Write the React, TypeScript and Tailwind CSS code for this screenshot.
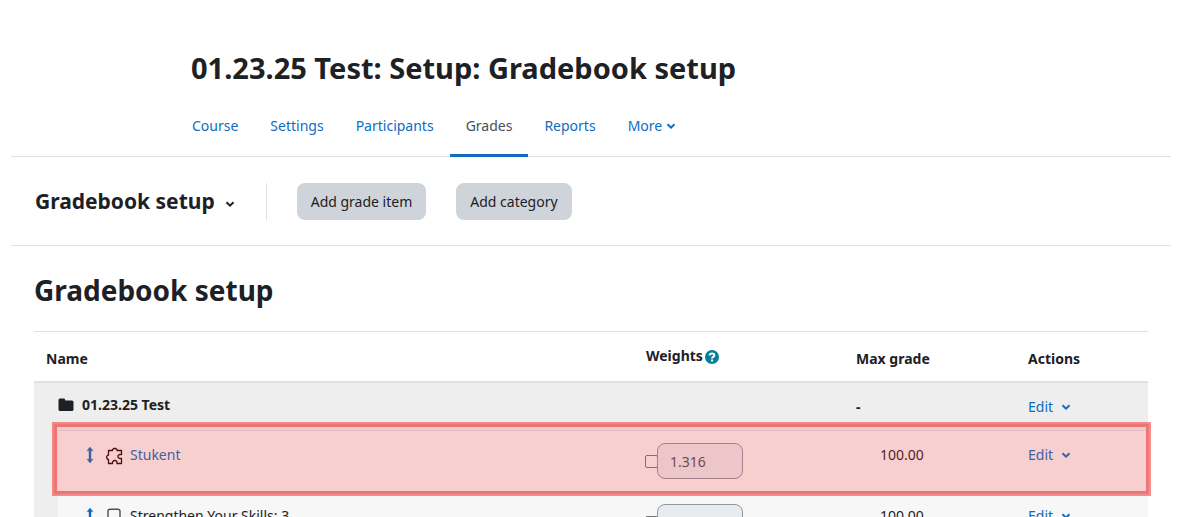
import clsx from 'clsx';

interface GradeItem {
  id: string;
  name: string;
  kind: 'tool' | 'quiz';
  weight: string;
  maxGrade: string;
}

const tabs = ['Course', 'Settings', 'Participants', 'Grades', 'Reports'];

const items: GradeItem[] = [
  { id: 'stukent', name: 'Stukent', kind: 'tool', weight: '1.316', maxGrade: '100.00' },
  { id: 'skills3', name: 'Strengthen Your Skills: 3', kind: 'quiz', weight: '1.316', maxGrade: '100.00' },
];

function Chevron({ className }: { className?: string }) {
  return (
    <svg viewBox="0 0 10 8" className={clsx('inline-block h-2 w-[10px]', className)} aria-hidden="true">
      <path d="M1.5 2.2 L5 5.6 L8.5 2.2" fill="none" stroke="currentColor" strokeWidth="2" />
    </svg>
  );
}

function MoveIcon() {
  return (
    <svg viewBox="0 0 8 16" className="h-4 w-2" aria-hidden="true">
      <path d="M4 0 L7 3.8 H5 V12.2 H7 L4 16 L1 12.2 H3 V3.8 H1 Z" fill="currentColor" stroke="currentColor" strokeWidth="0.4" />
    </svg>
  );
}

function FolderIcon() {
  return (
    <svg viewBox="0 0 16 14" className="h-[14px] w-4" aria-hidden="true">
      <path d="M2 0.5 H6 Q7 0.5 7 1.5 L7.4 2.5 H14 Q15.5 2.5 15.5 4 V11.5 Q15.5 13 14 13 H2 Q0.5 13 0.5 11.5 V2 Q0.5 0.5 2 0.5 Z" fill="currentColor" />
    </svg>
  );
}

function PuzzleIcon() {
  return (
    <svg viewBox="0 0 18 18" className="mt-0.5 h-[18px] w-[18px]" aria-hidden="true">
      <path
        d="M2.5 3.5 H6.5 V2.8 L7.8 1.5 H9.8 L11 2.8 V3.5 H15.5 V7.5 H13.5 L12 8.8 V10.2 L13.5 11.5 H15.5 V16.5 H11 V15 L9.8 13.5 H8 L6.5 15 V16.5 H2.5 V12.5 H1.8 L0.7 11.2 V9.4 L1.8 8.2 H2.5 Z"
        fill="none"
        stroke="#1d0508"
        strokeWidth="1.3"
        strokeLinejoin="round"
      />
    </svg>
  );
}

function QuizIcon() {
  return (
    <svg viewBox="0 0 18 18" className="h-[18px] w-[18px]" aria-hidden="true">
      <rect x="2" y="2.2" width="12" height="14" rx="2" fill="none" stroke="#495057" strokeWidth="1.4" />
    </svg>
  );
}

function HelpIcon() {
  return (
    <svg viewBox="0 0 14 14" className="mt-0.5 h-[14px] w-[14px]" aria-hidden="true">
      <circle cx="7" cy="7" r="7" fill="#008196" />
      <path d="M4.6 5.4 Q4.9 3.6 7 3.6 Q9.3 3.6 9.3 5.4 Q9.3 6.4 8 7 Q7.1 7.4 7.1 8.5" fill="none" stroke="#fff" strokeWidth="2" />
      <rect x="6" y="9.5" width="2.2" height="2" fill="#fff" />
    </svg>
  );
}

function EditButton() {
  return (
    <button type="button" className="flex items-center gap-2 text-[#0f6cbf]">
      Edit
      <Chevron />
    </button>
  );
}

function ItemRow({ item }: { item: GradeItem }) {
  return (
    <tr className="h-[61px] border-t border-[#dee2e6] bg-[#f7f7f7] align-top">
      <td className="pt-3 pl-7">
        <div className="flex h-6 items-center text-[#0f6cbf]">
          <button type="button" title="Move" className="mr-3">
            <MoveIcon />
          </button>
          {item.kind === 'tool' ? <PuzzleIcon /> : <QuizIcon />}
          {item.kind === 'tool' ? (
            <a href="#stukent" className="ml-1.5">{item.name}</a>
          ) : (
            <span className="ml-1.5 text-[#1d2125]">{item.name}</span>
          )}
        </div>
      </td>
      <td className="pt-3 pl-[11px]">
        <div className="flex items-center">
          <input
            type="checkbox"
            aria-label={`Override weight of ${item.name}`}
            className="-mr-px h-[13px] w-[13px] appearance-none rounded-[2px] border border-[#767676]"
          />
          <input
            type="text"
            disabled
            defaultValue={item.weight}
            aria-label={`Weight of ${item.name}`}
            className="h-9 w-[86px] rounded-lg border border-[#8f959e] bg-[#e9ecef] px-3 text-[#495057]"
          />
        </div>
      </td>
      <td className="pt-3 pl-9">{item.maxGrade}</td>
      <td className="pt-3 pl-3">
        <EditButton />
      </td>
    </tr>
  );
}

export default function App() {
  return (
    <div className="h-screen overflow-hidden bg-white pr-[23px] pl-[11px] font-['Noto_Sans','Segoe_UI',sans-serif] text-sm leading-6 text-[#1d2125]">
      <header className="border-b border-[#dee2e6] pt-12">
        <div className="mx-auto max-w-[830px]">
          <h1 className="px-[15px] text-[29px] leading-10 font-bold">01.23.25 Test: Setup: Gradebook setup</h1>
          <nav className="-mb-px flex pt-2">
            {tabs.map((tab) => (
              <a
                key={tab}
                href={`#${tab.toLowerCase()}`}
                className={clsx(
                  'flex h-[61px] items-center border-b-[3px] px-4 pt-0.5',
                  tab === 'Grades' ? 'border-[#0f6cbf] text-[#495057]' : 'border-transparent text-[#0f6cbf]'
                )}
              >
                {tab}
              </a>
            ))}
            <button type="button" className="flex h-[61px] items-center gap-1 border-b-[3px] border-transparent px-4 pt-0.5 text-[#0f6cbf]">
              More
              <Chevron />
            </button>
          </nav>
        </div>
      </header>

      <div className="flex h-[89px] items-center border-b border-[#dee2e6] pl-6">
        <button type="button" className="flex items-center gap-2.5 text-[21px] font-bold">
          Gradebook setup
          <Chevron className="mt-1.5" />
        </button>
        <div className="ml-[31px] flex h-[37px] gap-[30px] border-l border-[#dee2e6] pl-[30px]">
          <button type="button" className="rounded-lg bg-[#ced4da] px-3.5 pt-0.5">Add grade item</button>
          <button type="button" className="rounded-lg bg-[#ced4da] px-3.5 pt-0.5">Add category</button>
        </div>
      </div>

      <main className="px-[23px]">
        <h2 className="pt-6 pb-[21px] text-[28px] leading-10 font-bold">Gradebook setup</h2>
        <div className="relative">
          <table className="w-full table-fixed border-collapse text-left">
            <colgroup>
              <col className="w-6" />
              <col />
              <col className="w-[210px]" />
              <col className="w-[172px]" />
              <col className="w-[132px]" />
            </colgroup>
            <thead>
              <tr className="h-[50px] border-t border-b-2 border-[#dee2e6]">
                <th colSpan={2} className="pt-1.5 pl-3">Name</th>
                <th className="pt-1 pl-3">
                  <span className="flex items-center gap-0.5 pb-1">
                    Weights
                    <HelpIcon />
                  </span>
                </th>
                <th className="pt-1.5 pl-3">Max grade</th>
                <th className="pt-1.5 pl-3">Actions</th>
              </tr>
            </thead>
            <tbody>
              <tr className="h-[49px] bg-[#eee]">
                <th colSpan={2} className="pb-1 pl-6">
                  <span className="flex items-center gap-2">
                    <FolderIcon />
                    01.23.25 Test
                  </span>
                </th>
                <td />
                <td className="pt-px pl-3 font-bold">-</td>
                <td className="pt-px pl-3">
                  <EditButton />
                </td>
              </tr>
              <tr className="bg-[#eee]">
                <td rowSpan={items.length + 1} />
              </tr>
              {items.map((item) => (
                <ItemRow key={item.id} item={item} />
              ))}
            </tbody>
          </table>
          <div className="pointer-events-none absolute top-[91px] -right-[3px] left-[18px] h-[74px] border-2 border-[#f25050]/65">
            <div className="h-full border-[3px] border-[#e84c4c]/75 bg-[#fa3232]/20 bg-clip-padding" />
          </div>
        </div>
      </main>
    </div>
  );
}
